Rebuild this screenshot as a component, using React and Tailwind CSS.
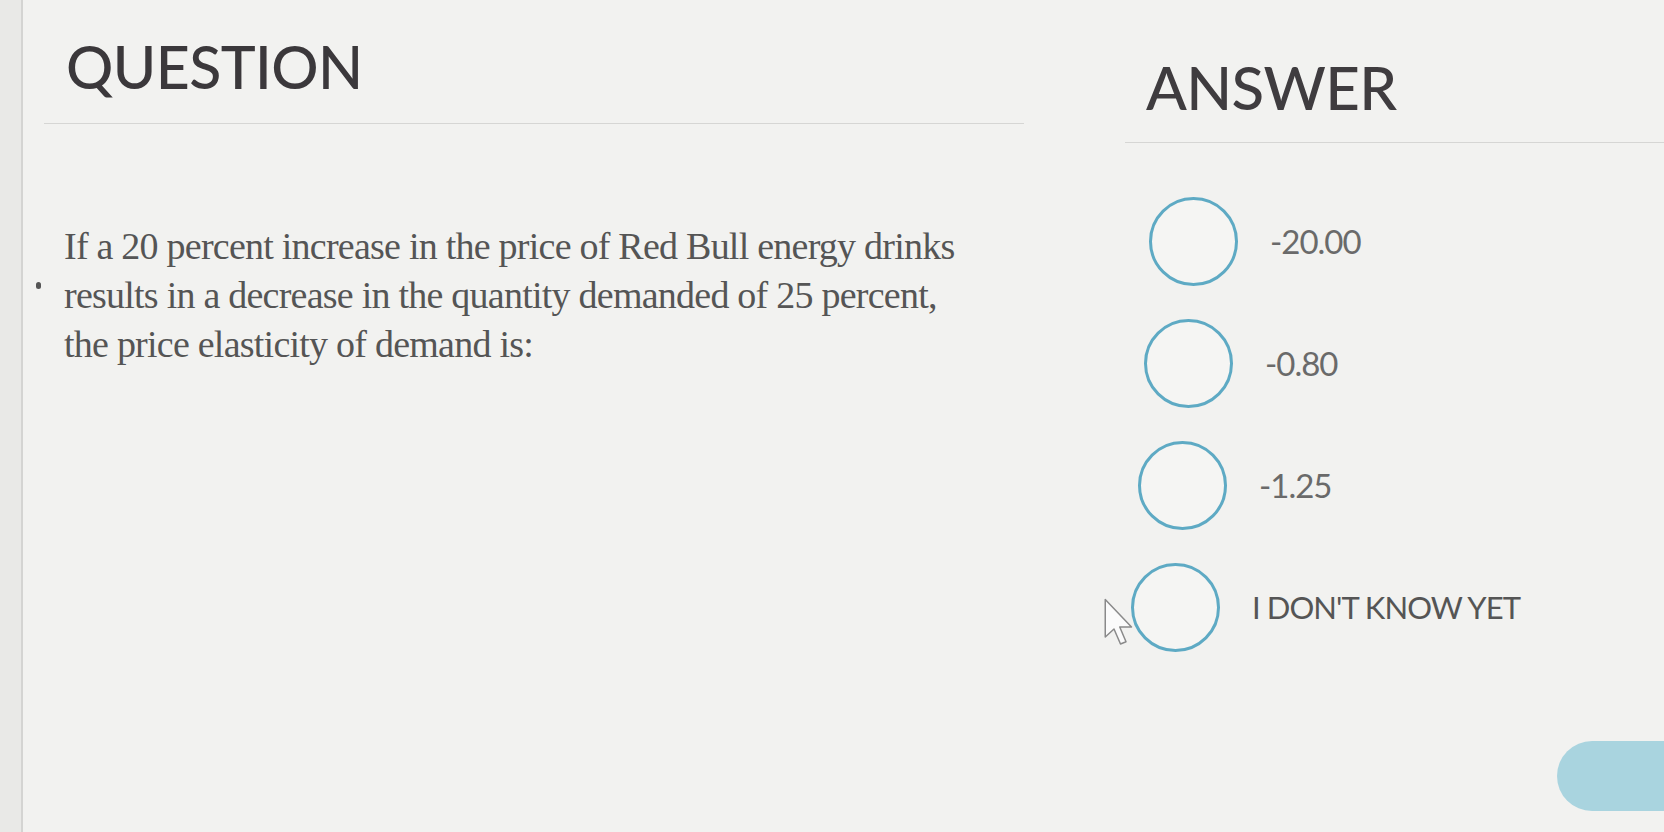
const options = [
  { label: '-20.00', shift: 'ml-[9px]' },
  { label: '-0.80', shift: 'ml-[4px]' },
  { label: '-1.25', shift: 'ml-[-2px]' },
  { label: "I DON'T KNOW YET", shift: 'ml-[-9px]' },
]

function Cursor() {
  return (
    <svg className="absolute left-[1104px] top-[598px]" width="30" height="48" viewBox="0 0 12 19" fill="none">
      <path d="M0.5 0.5 L0.5 15.5 L4 12.3 L6.6 18.3 L8.8 17.4 L6.3 11.5 L11 11.5 Z" fill="#fbfbfb" stroke="#8a8a8a" strokeWidth="0.6" strokeLinejoin="round" />
    </svg>
  )
}

export default function App() {
  return (
    <div className="relative flex h-[832px] w-full overflow-hidden bg-[#f2f2f0]" style={{ fontFamily: 'Lato, "Open Sans", sans-serif' }}>
      <div className="w-[23px] shrink-0 border-r-2 border-[#d4d4d2] bg-[#e9e9e7]" />

      <div className="flex flex-1">
        {/* question column */}
        <div className="ml-[21px] w-[980px] shrink-0">
          <div className="border-b border-[#d6d6d4] pl-[22px] pt-[37px] pb-[27px]">
            <h1 className="text-[59px] font-medium leading-none tracking-[-0.01em] text-[#3b383b]">QUESTION</h1>
          </div>
          <p className="mt-[98px] pl-[20px] text-[38px] leading-[49px] tracking-[-0.02em] text-[#555]" style={{ fontFamily: '"Liberation Serif", "DejaVu Serif", serif' }}>
            If a 20 percent increase in the price of Red Bull energy drinks<br />
            results in a decrease in the quantity demanded of 25 percent,<br />
            the price elasticity of demand is:
          </p>
        </div>

        {/* answer column */}
        <div className="ml-[101px] flex-1">
          <div className="border-b border-[#d6d6d4] pl-[21px] pt-[57px] pb-[25px]">
            <h2 className="text-[60px] font-medium leading-none tracking-[-0.01em] text-[#3f3c3f]">ANSWER</h2>
          </div>
          <div className="mt-[54px] flex flex-col gap-[33px] pl-[15px]">
            {options.map(o => (
              <label key={o.label} className={`flex h-[89px] cursor-pointer items-center gap-[32px] ${o.shift}`}>
                <span className="h-[89px] w-[89px] shrink-0 rounded-full border-[3px] border-[#5eaac4] bg-[#f5f5f3]" />
                <span className={`tracking-[-0.03em] ${o.label.startsWith('I') ? 'text-[31px] text-[#555]' : 'text-[33px] text-[#6a6a6a]'}`}>{o.label}</span>
              </label>
            ))}
          </div>
        </div>
      </div>

      <span className="absolute left-[36px] top-[282px] h-[7px] w-[5px] rounded-full bg-[#555]" />
      <Cursor />
      <button className="absolute left-[1557px] top-[741px] h-[70px] w-[160px] rounded-full bg-[#a9d4df]" />
    </div>
  )
}
